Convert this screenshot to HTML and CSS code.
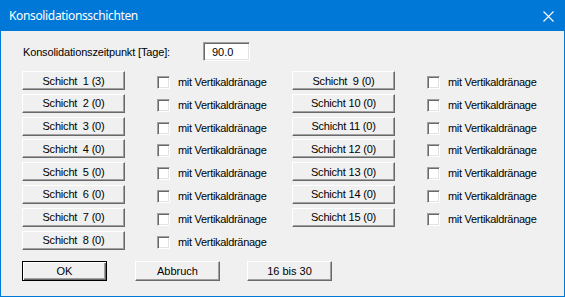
FILE: index.html
```html
<!DOCTYPE html>
<html lang="de">
<head>
  <meta charset="UTF-8" />
  <title>Konsolidationsschichten</title>
  <link rel="stylesheet" href="styles.css">
</head>
<body>
  <div class="window">
    <div class="titlebar">
      <span class="title">Konsolidationsschichten</span>
      <svg class="close" width="11" height="11" viewBox="0 0 11 11">
        <path d="M0.5 0.5 L10.5 10.5 M10.5 0.5 L0.5 10.5" stroke="#fff" stroke-width="1.1" fill="none" />
      </svg>
    </div>

    <div class="content">
      <!-- Zeitpunkt -->
      <div class="time-row">
        <label class="time-label" for="zeit">Konsolidationszeitpunkt [Tage]:</label>
        <input class="field" id="zeit" type="text" value="90.0">
      </div>

      <!-- Schichten -->
      <div class="layers">
        <div class="layer"><button class="btn layer-btn">Schicht  1 (3)</button><span class="check"></span><span class="check-label">mit Vertikaldränage</span></div>
        <div class="layer"><button class="btn layer-btn">Schicht  2 (0)</button><span class="check"></span><span class="check-label">mit Vertikaldränage</span></div>
        <div class="layer"><button class="btn layer-btn">Schicht  3 (0)</button><span class="check"></span><span class="check-label">mit Vertikaldränage</span></div>
        <div class="layer"><button class="btn layer-btn">Schicht  4 (0)</button><span class="check"></span><span class="check-label">mit Vertikaldränage</span></div>
        <div class="layer"><button class="btn layer-btn">Schicht  5 (0)</button><span class="check"></span><span class="check-label">mit Vertikaldränage</span></div>
        <div class="layer"><button class="btn layer-btn">Schicht  6 (0)</button><span class="check"></span><span class="check-label">mit Vertikaldränage</span></div>
        <div class="layer"><button class="btn layer-btn">Schicht  7 (0)</button><span class="check"></span><span class="check-label">mit Vertikaldränage</span></div>
        <div class="layer"><button class="btn layer-btn">Schicht  8 (0)</button><span class="check"></span><span class="check-label">mit Vertikaldränage</span></div>
        <div class="layer"><button class="btn layer-btn">Schicht  9 (0)</button><span class="check"></span><span class="check-label">mit Vertikaldränage</span></div>
        <div class="layer"><button class="btn layer-btn">Schicht 10 (0)</button><span class="check"></span><span class="check-label">mit Vertikaldränage</span></div>
        <div class="layer"><button class="btn layer-btn">Schicht 11 (0)</button><span class="check"></span><span class="check-label">mit Vertikaldränage</span></div>
        <div class="layer"><button class="btn layer-btn">Schicht 12 (0)</button><span class="check"></span><span class="check-label">mit Vertikaldränage</span></div>
        <div class="layer"><button class="btn layer-btn">Schicht 13 (0)</button><span class="check"></span><span class="check-label">mit Vertikaldränage</span></div>
        <div class="layer"><button class="btn layer-btn">Schicht 14 (0)</button><span class="check"></span><span class="check-label">mit Vertikaldränage</span></div>
        <div class="layer"><button class="btn layer-btn">Schicht 15 (0)</button><span class="check"></span><span class="check-label">mit Vertikaldränage</span></div>
      </div>

      <!-- Aktionen -->
      <div class="actions">
        <button class="btn action-btn default">OK</button>
        <button class="btn action-btn">Abbruch</button>
        <button class="btn action-btn">16 bis 30</button>
      </div>
    </div>
  </div>
</body>
</html>
```

FILE: styles.css
```css
/* Global */
body {
  margin: 0;
  padding: 0;
  background: #f0f0f0;
  font-family: 'Liberation Sans', Arial, sans-serif;
  font-size: 11px;
  color: #000;
}
.window {
  width: 565px;
  height: 297px;
  box-sizing: border-box;
  border: 1px solid #0078d7;
  border-top: none;
  background: #f0f0f0;
}
/* Title bar */
.titlebar {
  height: 31px;
  margin: 0 -1px;
  padding: 0 11px 0 9px;
  background: #0078d7;
  color: #fff;
  display: flex;
  align-items: center;
}
.title {
  font-family: 'Noto Sans', sans-serif;
  font-size: 12px;
  flex: 1;
  letter-spacing: -0.35px;
}
.close {
  margin-top: 1px;
}
/* Content */
.content {
  padding: 11px 0 0 21px;
}
.time-row {
  display: flex;
  align-items: center;
  height: 19px;
}
.time-label {
  width: 180px;
  padding-left: 1px;
  letter-spacing: -0.15px;
}
.field {
  width: 47px;
  height: 19px;
  box-sizing: border-box;
  margin: 0;
  padding: 0 0 0 8px;
  font: inherit;
  background: #fff;
  border: 1px solid;
  border-color: #a0a0a0 #fff #fff #a0a0a0;
  box-shadow: inset 1px 1px #696969, inset -1px -1px #e3e3e3;
  outline: none;
}
/* Layers grid */
.layers {
  margin-top: 10px;
  display: grid;
  grid-auto-flow: column;
  grid-template-rows: repeat(8, 19px);
  grid-template-columns: 270px auto;
  row-gap: 3.8px;
}
.layer {
  display: flex;
  align-items: center;
}
.btn {
  margin: 0;
  padding: 0;
  font: inherit;
  color: #000;
  background: #f0f0f0;
  border: 1px solid;
  border-color: #fff #696969 #696969 #fff;
  box-shadow: inset -1px -1px #a0a0a0;
  white-space: pre;
  text-align: center;
}
.layer-btn {
  width: 103px;
  height: 19px;
  letter-spacing: -0.2px;
}
.check {
  width: 13px;
  height: 13px;
  box-sizing: border-box;
  margin: 4px 0 0 32px;
  background: #fff;
  border: 1px solid;
  border-color: #a0a0a0 #fff #fff #a0a0a0;
  box-shadow: inset 1px 1px #696969, inset -1px -1px #e3e3e3;
}
.check-label {
  margin: 3px 0 0 8px;
  letter-spacing: -0.3px;
}
/* Bottom buttons */
.actions {
  margin-top: 11px;
  display: flex;
}
.action-btn {
  width: 85px;
  height: 20px;
  margin-right: 27px;
}
.action-btn.default {
  border: 1px solid #000;
  box-shadow: inset 1px 1px #fff, inset -1px -1px #696969, inset -2px -2px #a0a0a0;
  margin-right: 28px;
}
```
